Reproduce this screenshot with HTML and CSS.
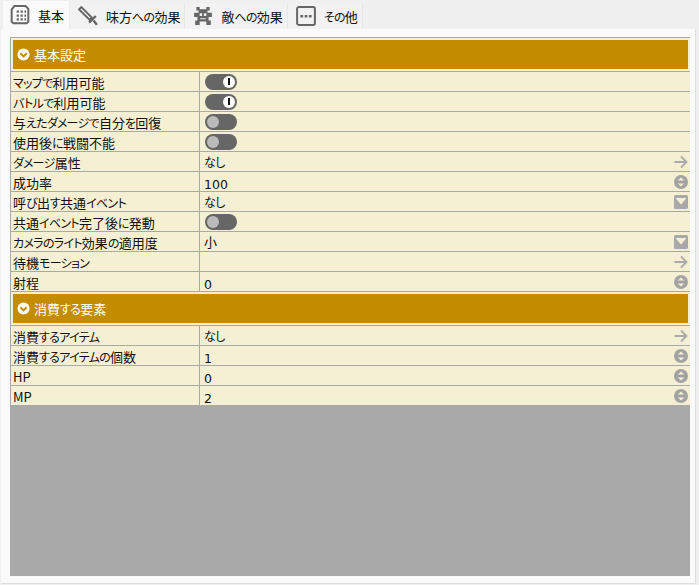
FILE: index.html
```html
<!DOCTYPE html>
<html lang="ja">
<head>
<meta charset="utf-8">
<title>基本</title>
<link rel="stylesheet" href="styles.css">
</head>
<body>
<svg class="defs" width="0" height="0" aria-hidden="true">
  <symbol id="chev" viewBox="0 0 14 14"><circle cx="7" cy="7" r="6.5" fill="#fff"/><path d="M3.6 5.6 7 9l3.4-3.4" fill="none" stroke="#c48d00" stroke-width="2.2"/></symbol>
  <symbol id="arrow" viewBox="0 0 14 14"><path d="M0.500 7h12M7 1.500l5.500 5.500-5.500 5.500" fill="none" stroke="#a9a9a9" stroke-width="1.800"/></symbol>
  <symbol id="spin" viewBox="0 0 14 14"><circle cx="7" cy="7" r="7" fill="#a3a3a3"/><path d="M7 2.4 10.2 5.6H3.8ZM7 11.6 3.8 8.4H10.2Z" fill="#f5efd3"/><rect x="3" y="6.4" width="8" height="1.2" fill="#a3a3a3"/></symbol>
  <symbol id="drop" viewBox="0 0 14 14"><rect width="14" height="14" rx="1.5" fill="#a9a9a9"/><path d="M1.500 3h11L7 9.500Z" fill="#f5efd3"/></symbol>
</svg>
<nav class="tabs">
  <div class="tab active">
    <svg class="tab-icon" width="20" height="20" viewBox="0 0 18 18"><path d="M1.500 4 4 1h10l2.500 2.500V15l-1.500 1.500H3L1.500 15Z" fill="none" stroke="#666" stroke-width="1.800"/><path d="M6 5h2v2H6zM9.500 5h2v2h-2zM13 5h1.500v2H13zM6 8.500h2v2H6zM9.500 8.500h2v2h-2zM13 8.500h1.500v2H13zM6 12h2v2H6zM9.500 12h2v2h-2zM13 12h1.500v2H13z" fill="#666"/></svg>
    <span>基本</span>
  </div>
  <div class="tab">
    <svg class="tab-icon" width="20" height="20" viewBox="0 0 18 18"><path d="M1 3 3 1l9.500 9.500-2 2Z" fill="none" stroke="#666" stroke-width="1.800"/><path d="M10 15l6-6M14 13l3 4" fill="none" stroke="#666" stroke-width="2.200"/></svg>
    <span>味方<span class="kana">への</span>効果</span>
  </div>
  <div class="tab">
    <svg class="tab-icon" width="20" height="20" viewBox="0 0 18 18"><path d="M3 1h3v2h6V1h3v3h-2v2h4v4h-3v3h2v4h-4v-3H6v3H2v-4h2v-3H1V6h4V4H3Z" fill="#666"/><path d="M6 6.500h2.200v2.500H6zM9.800 6.500H12v2.500H9.800zM6.500 11h5v1h-5z" fill="#f0f0f0"/></svg>
    <span>敵<span class="kana">への</span>効果</span>
  </div>
  <div class="tab">
    <svg class="tab-icon" width="20" height="20" viewBox="0 0 18 18"><rect x="1" y="1" width="16" height="16" rx="1.500" fill="none" stroke="#666" stroke-width="1.800"/><path d="M4 8h2.400v2.400H4zM7.800 8h2.400v2.400H7.800zM11.600 8H14v2.400h-2.400z" fill="#666"/></svg>
    <span><span class="kana">その</span>他</span>
  </div>
</nav>
<main class="panel">
  <div class="sheet">
    <div class="group"><div class="group-bar">
      <svg class="group-icon"><use href="#chev"/></svg><span>基本設定</span>
    </div></div>
    <div class="row"><div class="label"><span class="kana">マップで</span>利用可能</div><div class="value"><span class="switch on"><i></i></span></div></div>
    <div class="row"><div class="label"><span class="kana">バトルで</span>利用可能</div><div class="value"><span class="switch on"><i></i></span></div></div>
    <div class="row"><div class="label">与<span class="kana">えたダメージで</span>自分<span class="kana">を</span>回復</div><div class="value"><span class="switch"><i></i></span></div></div>
    <div class="row"><div class="label">使用後<span class="kana">に</span>戦闘不能</div><div class="value"><span class="switch"><i></i></span></div></div>
    <div class="row"><div class="label"><span class="kana">ダメージ</span>属性</div><div class="value"><span class="kana">なし</span><svg class="action"><use href="#arrow"/></svg></div></div>
    <div class="row"><div class="label">成功率</div><div class="value num">100<svg class="action"><use href="#spin"/></svg></div></div>
    <div class="row"><div class="label">呼<span class="kana">び</span>出<span class="kana">す</span>共通<span class="kana">イベント</span></div><div class="value"><span class="kana">なし</span><svg class="action"><use href="#drop"/></svg></div></div>
    <div class="row"><div class="label">共通<span class="kana">イベント</span>完了後<span class="kana">に</span>発動</div><div class="value"><span class="switch"><i></i></span></div></div>
    <div class="row"><div class="label"><span class="kana">カメラのライト</span>効果<span class="kana">の</span>適用度</div><div class="value">小<svg class="action"><use href="#drop"/></svg></div></div>
    <div class="row"><div class="label">待機<span class="kana">モーション</span></div><div class="value"><svg class="action"><use href="#arrow"/></svg></div></div>
    <div class="row"><div class="label">射程</div><div class="value num">0<svg class="action"><use href="#spin"/></svg></div></div>
    <div class="group"><div class="group-bar">
      <svg class="group-icon"><use href="#chev"/></svg><span>消費<span class="kana">する</span>要素</span>
    </div></div>
    <div class="row"><div class="label">消費<span class="kana">するアイテム</span></div><div class="value"><span class="kana">なし</span><svg class="action"><use href="#arrow"/></svg></div></div>
    <div class="row"><div class="label">消費<span class="kana">するアイテムの</span>個数</div><div class="value num">1<svg class="action"><use href="#spin"/></svg></div></div>
    <div class="row"><div class="label">HP</div><div class="value num">0<svg class="action"><use href="#spin"/></svg></div></div>
    <div class="row"><div class="label">MP</div><div class="value num">2<svg class="action"><use href="#spin"/></svg></div></div>
  </div>
</main>
</body>
</html>
```
FILE: styles.css
```css
* { box-sizing: border-box; }
html, body { margin: 0; height: 100%; }
body {
  background: #f0f0f0;
  font-family: "Noto Sans CJK JP", sans-serif;
  font-feature-settings: "palt";
  font-size: 13px;
  color: #111;
  width: 699px;
  height: 585px;
  overflow: hidden;
  padding: 1px 3px 1px 1px;
  display: flex;
  flex-direction: column;
}
.defs { position: absolute; }
.kana { font-size: 12px; letter-spacing: -0.7px; }
.tabs { display: flex; height: 28px; padding-left: 2px; }
.tab {
  display: flex;
  align-items: center;
  gap: 8px;
  padding: 0 4px 0 8px;
  background: #f2f2f2;
  border-right: 1px solid #e6e6e6;
  margin-top: 2px;
}
.tab.active { background: #fafafa; margin-top: 0; padding: 0 5px 0 7px; gap: 8px; border-right: 1px solid #ececec; }
.tab-icon { flex: none; }
.panel {
  flex: 1;
  background: #fafafa;
  border-bottom: 1px solid #dedede;
  border-right: 1px solid #dedede;
  padding: 8px 5px 7px 9px;
  min-height: 0;
}
.sheet {
  height: 100%;
  background: #a9a9a9;
  border-top: 1px solid #a9a9a9;
  border-left: 1px solid #a9a9a9;
}
.group {
  height: 34px;
  padding: 2px;
  background: #f5efd3;
  border-bottom: 1px solid #a9a9a9;
}
.group-bar {
  height: 29px;
  background: #c48d00;
  color: #fff;
  display: flex;
  align-items: center;
  gap: 4px;
  padding: 0 0 1px 4px;
}
.group-icon { width: 13px; height: 13px; }
.row {
  display: flex;
  height: 20px;
  background: #f5efd3;
  border-bottom: 1px solid #a9a9a9;
  line-height: 19px;
}
.label { width: 189px; padding-left: 2px; padding-top: 1px; border-right: 1px solid #a9a9a9; white-space: nowrap; overflow: hidden; }
.value { flex: 1; display: flex; align-items: center; padding: 0 2px 0 4px; }
.value.num { font-family: "DejaVu Sans", sans-serif; font-size: 12.500px; padding-top: 5px; }
.action { width: 14px; height: 14px; margin-left: auto; }
.value.num .action { margin-top: -5px; }
.switch {
  width: 32px;
  height: 16px;
  border-radius: 8px;
  background: #666;
  display: flex;
  align-items: center;
  padding: 0 2px;
  margin-left: 1px;
}
.switch i {
  display: block;
  width: 12px;
  height: 12px;
  border-radius: 50%;
  background: #bbb;
}
.switch.on { justify-content: flex-end; }
.switch.on i { background: linear-gradient(#111, #111) center / 2px 7px no-repeat #fff; }
```
